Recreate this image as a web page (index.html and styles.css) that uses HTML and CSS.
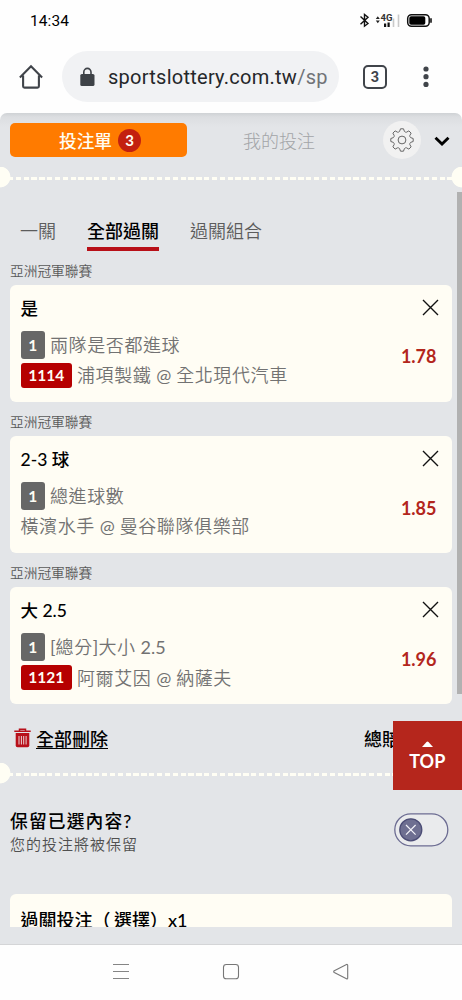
FILE: index.html
```html
<!DOCTYPE html>
<html lang="zh-Hant">
<head>
<meta charset="utf-8">
<title>投注單</title>
<link rel="stylesheet" href="styles.css">
</head>
<body>
<div class="phone">
  <div class="status">
    <span class="clock">14:34</span>
    <svg class="status-icons" width="76" height="20" viewBox="0 0 76 20">
      <path d="M1.500 6.500l7.500 7-3.500 2.700V4.500l3.500 2.700-7.500 7" fill="none" stroke="#111" stroke-width="1.400"/>
      <path d="M16.800 9l2-2.700 2 2.700zM16.800 10.500l2 2.700 2-2.700z" fill="#222"/>
      <text x="21.500" y="11" class="net">4G</text>
      <path d="M25 13.500h2.200v3.500H25zM28.500 12.500h2.200v4.500h-2.200z" fill="#111"/>
      <path d="M34.500 8.500v8.500M39.500 4.500v12.500" stroke="#c9c9c9" stroke-width="1.600"/>
      <rect x="48.700" y="4.700" width="21.500" height="11.600" rx="3.800" fill="#fff" stroke="#111" stroke-width="1.500"/>
      <rect x="50.300" y="6.300" width="16" height="8.400" rx="1.800" fill="#000"/>
      <path d="M71.200 8.200h1.600v4.600h-1.600z" fill="#111"/>
    </svg>
  </div>
  <div class="browser">
    <svg class="home" width="24" height="26" viewBox="0 0 24 26"><path d="M.9 13.600L12 2.300l11.100 11.300M4.100 11.500v10.700q0 1.400 1.400 1.400h13q1.400 0 1.400-1.400V11.500" fill="none" stroke="#40444a" stroke-width="2.100"/></svg>
    <div class="url">
      <svg width="15" height="20" viewBox="0 0 15 20"><rect x=".3" y="7" width="14.200" height="12" rx="1.600" fill="#3e4247"/><path d="M3.800 8V5a3.600 3.600 0 0 1 7.200 0v3" fill="none" stroke="#3e4247" stroke-width="1.600"/></svg>
      <span class="addr">sportslottery.com.tw<span class="path">/sp</span></span>
    </div>
    <span class="tabcount">3</span>
    <svg class="dots" width="6" height="22" viewBox="0 0 6 22" fill="#40444a"><circle cx="3" cy="3" r="2.600"/><circle cx="3" cy="10.700" r="2.600"/><circle cx="3" cy="18.400" r="2.600"/></svg>
  </div>
  <main class="page">
    <div class="slip-head">
      <div class="slip-tab">投注單<span class="count">3</span></div>
      <div class="my-bets">我的投注</div>
      <svg class="gear" width="38" height="38" viewBox="-19 -19 38 38">
        <circle r="19" fill="#f1f1f1"/>
        <g fill="none" stroke="#666" stroke-width="1"><circle r="3.900"/>
        <path stroke-linejoin="round" d="M-1.500-11.200H1.500L2.400-8.600Q3.400-7.600 4.380-7.780L6.860-9.120 9.120-6.860 7.780-4.380Q7.600-3.400 8.600-2.400L11.200-1.500V1.500L8.600 2.400Q7.600 3.400 7.780 4.380L9.120 6.860 6.860 9.120 4.380 7.780Q3.400 7.600 2.400 8.600L1.500 11.200H-1.500L-2.400 8.600Q-3.400 7.600-4.380 7.780L-6.860 9.120-9.120 6.860-7.780 4.380Q-7.600 3.400-8.600 2.400L-11.200 1.500V-1.500L-8.600-2.400Q-7.600-3.400-7.780-4.380L-9.120-6.860-6.860-9.120-4.380-7.780Q-3.400-7.600-2.400-8.600Z"/></g>
      </svg>
      <svg class="chev" width="16" height="11" viewBox="0 0 16 11"><path d="M1.500 1.800L8 8l6.500-6.200" fill="none" stroke="#000" stroke-width="2.900"/></svg>
    </div>
    <div class="cut"></div>
    <nav class="types"><span>一關</span><span class="active">全部過關</span><span>過關組合</span></nav>

    <section class="bet">
      <div class="league">亞洲冠軍聯賽</div>
      <div class="card">
        <div class="info">
          <div class="pick">是</div>
          <div class="line market"><span class="tag gray">1</span><span>兩隊是否都進球</span></div>
          <div class="line match"><span class="tag red">1114</span><span>浦項製鐵 <span class="lat">@</span> 全北現代汽車</span></div>
        </div>
        <div class="side"><svg width="17" height="17" viewBox="0 0 17 17"><path d="M1 1l15 15M16 1L1 16" stroke="#111" stroke-width="1.400"/></svg><span class="odds">1.78</span></div>
      </div>
    </section>
    <section class="bet">
      <div class="league">亞洲冠軍聯賽</div>
      <div class="card">
        <div class="info">
          <div class="pick">2-3 球</div>
          <div class="line market"><span class="tag gray">1</span><span>總進球數</span></div>
          <div class="line match"><span>橫濱水手 <span class="lat">@</span> 曼谷聯隊俱樂部</span></div>
        </div>
        <div class="side"><svg width="17" height="17" viewBox="0 0 17 17"><path d="M1 1l15 15M16 1L1 16" stroke="#111" stroke-width="1.400"/></svg><span class="odds">1.85</span></div>
      </div>
    </section>
    <section class="bet">
      <div class="league">亞洲冠軍聯賽</div>
      <div class="card">
        <div class="info">
          <div class="pick">大 2.5</div>
          <div class="line market"><span class="tag gray">1</span><span><span class="lat">[</span>總分<span class="lat">]</span>大小 <span class="lat">2.5</span></span></div>
          <div class="line match"><span class="tag red">1121</span><span>阿爾艾因 <span class="lat">@</span> 納薩夫</span></div>
        </div>
        <div class="side"><svg width="17" height="17" viewBox="0 0 17 17"><path d="M1 1l15 15M16 1L1 16" stroke="#111" stroke-width="1.400"/></svg><span class="odds">1.96</span></div>
      </div>
    </section>

    <div class="totals">
      <svg width="17" height="20" viewBox="0 0 17 20"><path d="M.3 3.300h16.400M5.500 3V1.200h6V3" fill="none" stroke="#b8101a" stroke-width="1.500"/><path d="M1.700 5h13.600v12.500q0 1.800-1.800 1.800h-10q-1.800 0-1.800-1.800z" fill="#b8101a"/><path d="M5 8v8.500M7.400 8v8.500M9.700 8v8.500M12.100 8v8.500" stroke="#e9d4d6" stroke-width="1"/></svg>
      <span class="clear">全部刪除</span>
      <span class="sum">總賠率</span>
    </div>
    <div class="cut"></div>
    <div class="keep">
      <div><div class="keep-title">保留已選內容?</div><div class="keep-sub">您的投注將被保留</div></div>
      <svg width="55" height="34" viewBox="0 0 55 34"><rect x=".8" y=".8" width="53" height="32" rx="16" fill="#eaebed" stroke="#6c6c92" stroke-width="1.300"/><circle cx="16.800" cy="16.800" r="11" fill="#6e6f91" stroke="#4b4c75" stroke-width="1.300"/><path d="M12 12l9.600 9.600M21.600 12L12 21.600" stroke="#f4f4fa" stroke-width="1.200"/></svg>
    </div>
    <div class="parlay">過關投注（<span class="opt">選擇</span>）x1</div>
    <div class="scroll"></div>
    <div class="top"><svg width="11" height="6" viewBox="0 0 11 6"><path d="M0 6l4.500-5q1-1 2 0L11 6z" fill="#fff"/></svg>TOP</div>
  </main>
  <div class="sysnav">
    <svg width="18" height="18" viewBox="0 0 18 18"><path d="M1 1.500h16M1 8.500h16M1 15.500h16" stroke="#858585" stroke-width="1.100"/></svg>
    <svg width="18" height="18" viewBox="0 0 18 18"><rect x="1.500" y="1.500" width="15" height="14.300" rx="2.800" fill="none" stroke="#777" stroke-width="1.100"/></svg>
    <svg width="18" height="18" viewBox="0 0 18 18"><path d="M2.300 7.800L14.500 1.500q1.200-.4 1.200 1V15q0 1.400-1.200.8L2.300 9.500q-1.200-.9 0-1.700z" fill="none" stroke="#777" stroke-width="1.100"/></svg>
  </div>
</div>
</body>
</html>
```
FILE: styles.css
```css
* { box-sizing: border-box; }
body { margin: 0; background: #fff; font-family: Lato, "Noto Sans CJK TC", sans-serif; color: #000; }
svg { display: block; flex: none; }
.phone { width: 462px; height: 1000px; overflow: hidden; display: flex; flex-direction: column; white-space: nowrap; background: #fefefe; }

.status { height: 40px; display: flex; justify-content: space-between; padding: 10px 27px 0 30px; }
.clock { font: 15.5px/23px Roboto, sans-serif; letter-spacing: 0.1px; }
.net { font: 700 9.5px Roboto, sans-serif; fill: #333; }

.browser { height: 73px; display: flex; align-items: center; padding: 0 0 0 19px; }
.url { width: 277px; height: 51px; margin-left: 19px; border-radius: 26px; background: #f1f2f4; display: flex; align-items: center; padding-left: 18px; gap: 13px; }
.addr { font: 20px/30px Roboto, sans-serif; letter-spacing: 0.260px; color: #25272a; padding-top: 1px; }
.path { color: #707377; }
.tabcount { width: 24px; height: 24px; margin-left: 24px; border: 2.3px solid #40444a; border-radius: 5px; font: 700 14.500px/21px Roboto, sans-serif; text-align: center; color: #40444a; }
.dots { margin-left: 36px; }

.page { position: relative; height: 831px; background: linear-gradient(#cfd2d5, #dcdee1 4px, #e3e5e8 14px); border-radius: 7px 7px 0 0; }
.slip-head { height: 54px; display: flex; align-items: center; padding-left: 10px; }
.slip-tab { width: 177px; height: 34px; padding-left: 3px; border-radius: 5px; background: #ff7b00; color: #fffdf3; font-size: 17.700px; font-weight: 500; display: flex; align-items: center; justify-content: center; gap: 6px; }
.count { width: 23px; height: 23px; border-radius: 50%; background: #c3200f; font: 700 15px/23px Lato, sans-serif; text-align: center; }
.my-bets { width: 71px; margin-left: 56px; font-size: 18px; font-weight: 300; color: #a2a4a7; }
.gear { margin-left: 69px; }
.chev { margin-left: 13px; margin-top: 2px; }

.cut { height: 21px; background: radial-gradient(circle at 0 10px, #fffef4 10px, transparent 10.800px), radial-gradient(circle at 462px 10px, #fffef4 10px, transparent 10.800px), repeating-linear-gradient(90deg, #fffef4 0 5.300px, transparent 5.300px 7.850px) 0 10px / 100% 3px no-repeat; }

.types { height: 74px; display: flex; padding: 30px 0 0 20px; font-size: 18px; line-height: 26px; font-weight: 350; color: #5c5c5c; }
.types span { height: 33px; }
.types .active { margin: 0 31px; font-weight: 500; color: #000; border-bottom: 4px solid #b81018; }

.bet { height: 151.200px; padding: 0 10px; }
.league { height: 22.500px; font-size: 13.700px; line-height: 18px; font-weight: 350; color: #5a5a5a; }
.card { height: 117.500px; border-radius: 6px; background: #fffdf4; display: flex; justify-content: space-between; padding: 11px 13px 0 10.500px; }
.pick { height: 35px; font-size: 17.500px; line-height: 26px; font-weight: 500; }
.line { display: flex; align-items: center; gap: 5px; font-size: 18px; letter-spacing: 0.600px; word-spacing: -0.700px; font-weight: 350; color: #727272; }
.line > span:last-child { position: relative; top: -1px; }
.lat { font-weight: 400; letter-spacing: 0.100px; }
.market { height: 28px; }
.match { height: 25px; margin-top: 4.300px; }
.tag { border-radius: 3px; color: #fffdf4; font: 700 15.500px/25px Lato, sans-serif; letter-spacing: 0; text-align: center; }
.gray { width: 24.500px; line-height: 28px; background: #676767; }
.red { width: 51.500px; background: #b60000; }
.side { display: flex; flex-direction: column; align-items: flex-end; padding-top: 3.600px; }
.odds { margin: 27.400px 2.500px 0 0; font-size: 18px; line-height: 26px; font-weight: 700; color: #b3261c; }

.totals { height: 47.400px; display: flex; align-items: center; padding: 0 0 3px 14px; font-size: 18px; font-weight: 500; }
.clear { margin-left: 5px; text-decoration: underline; text-underline-offset: 2px; }
.sum { margin-left: 256px; }

.keep { height: 110px; display: flex; align-items: flex-start; justify-content: space-between; padding: 25px 13.500px 0 10px; }
.keep > svg { margin-top: 4px; }
.keep-title { font-size: 17.800px; line-height: 25px; letter-spacing: 1.100px; font-weight: 500; }
.keep-sub { font-size: 15px; line-height: 20px; letter-spacing: 1px; font-weight: 350; color: #505050; }
.parlay { height: 33px; overflow: hidden; margin: 0 10px; border-radius: 6px 6px 0 0; background: #fffdf4; padding: 13px 0 0 10.500px; font-size: 18px; line-height: 26px; font-weight: 500; }
.opt { margin-left: 3.500px; }

.scroll { position: absolute; right: 0; top: 79px; width: 5px; height: 502px; background: #b1b1b1; }
.top { position: absolute; right: 0; top: 608px; width: 69.500px; height: 69px; background: #b5261c; color: #fff; font-size: 18px; line-height: 24px; font-weight: 700; display: flex; flex-direction: column; align-items: center; padding-top: 20px; gap: 2px; }
.sysnav { height: 56px; display: flex; justify-content: center; gap: 92px; padding-top: 18px; border-top: 1px solid #d4d5d7; }
```
